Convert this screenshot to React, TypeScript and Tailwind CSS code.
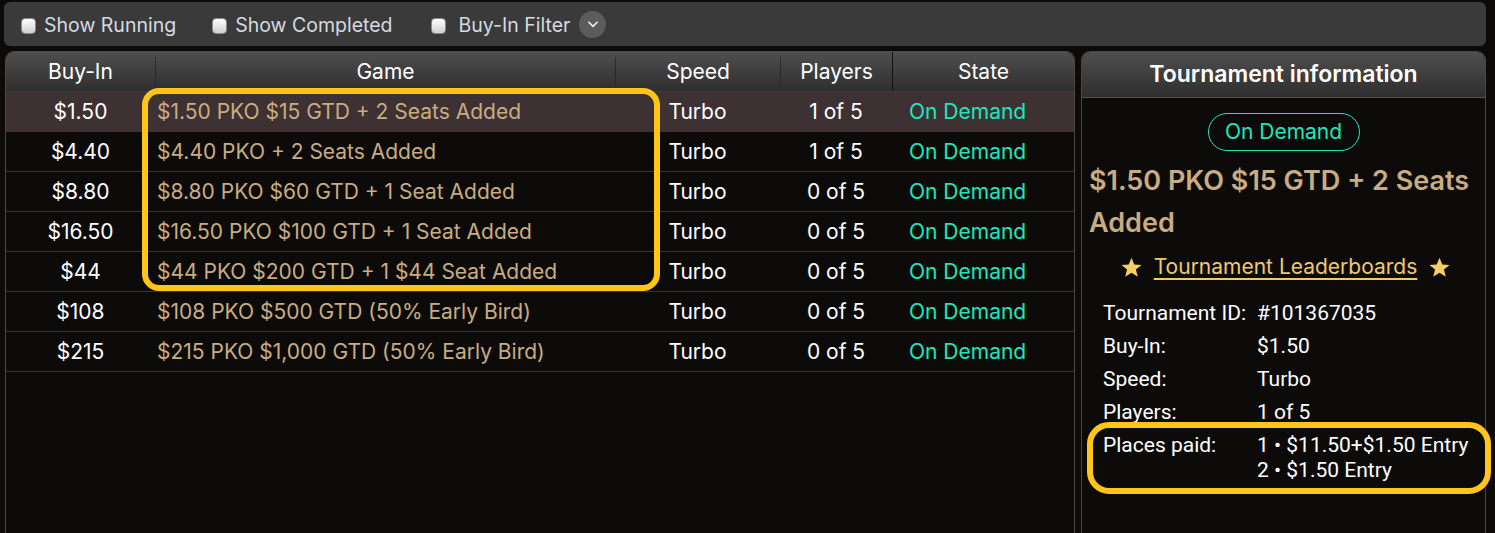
import React from "react";

const rows = [
  { buy: "$1.50", game: "$1.50 PKO $15 GTD + 2 Seats Added", players: "1 of 5", sel: true },
  { buy: "$4.40", game: "$4.40 PKO + 2 Seats Added", players: "1 of 5" },
  { buy: "$8.80", game: "$8.80 PKO $60 GTD + 1 Seat Added", players: "0 of 5" },
  { buy: "$16.50", game: "$16.50 PKO $100 GTD + 1 Seat Added", players: "0 of 5" },
  { buy: "$44", game: "$44 PKO $200 GTD + 1 $44 Seat Added", players: "0 of 5" },
  { buy: "$108", game: "$108 PKO $500 GTD (50% Early Bird)", players: "0 of 5" },
  { buy: "$215", game: "$215 PKO $1,000 GTD (50% Early Bird)", players: "0 of 5" },
];

function Check() {
  return (
    <span className="inline-block w-[15px] h-[16px] rounded-[4px] border border-[#8a8a8a] bg-gradient-to-b from-[#ffffff] to-[#cfcfcf]" />
  );
}

function Star() {
  return (
    <svg width="23" height="23" viewBox="0 0 24 24" className="shrink-0">
      <path
        d="M12 1.8l2.9 7.1 7.6.4-5.9 4.9 2 7.4L12 17.4l-6.6 4.2 2-7.4L1.5 9.3l7.6-.4z"
        fill="#f6cf63"
      />
    </svg>
  );
}

export default function App() {
  const cellFont = { fontFamily: "Inter, 'Noto Sans', sans-serif" };
  return (
    <div
      className="w-[1495px] h-[533px] overflow-hidden bg-[#0c0b0a] pt-[2px] flex flex-col"
      style={cellFont}
    >
      {/* Top bar */}
      <div className="ml-[4px] w-[1482px] h-[44px] shrink-0 rounded-[6px] bg-[#3a3a3a] flex items-center pt-[3px] pl-[17px] text-[19.5px] text-[#d6d9e1]">
        <Check />
        <span className="ml-[8px]">Show Running</span>
        <span className="ml-[36px] flex"><Check /></span>
        <span className="ml-[8px]">Show Completed</span>
        <span className="ml-[38px] flex"><Check /></span>
        <span className="ml-[13px]">Buy-In Filter</span>
        <span className="ml-[9px] -mt-[3px] w-[27px] h-[27px] rounded-full bg-[#5c5c5c] flex items-center justify-center">
          <svg width="14" height="14" viewBox="0 0 24 24" fill="none" stroke="#e8e8e8" strokeWidth="3" strokeLinecap="round" strokeLinejoin="round">
            <path d="M5 9l7 7 7-7" />
          </svg>
        </span>
      </div>

      <div className="flex mt-[5px] ml-[5px] gap-[6px] flex-1">
        {/* Left table panel */}
        <div className="relative w-[1070px] h-[490px] rounded-t-[9px] border border-[#484848] border-b-0 bg-[#0c0b0a]">
          <div className="flex h-[40px] rounded-t-[8px] bg-gradient-to-b from-[#4f4f4f] to-[#2e2e2e] border-b border-[#3a3a3a] text-[21px] text-white">
            <div className="w-[149px] flex items-center justify-center">Buy-In</div>
            <div className="w-[460px] flex items-center justify-center border-l border-[#2a2a2a] my-[5px]">Game</div>
            <div className="w-[165px] flex items-center justify-center border-l border-[#2a2a2a] my-[5px]">Speed</div>
            <div className="w-[112px] flex items-center justify-center border-l border-[#2a2a2a] my-[5px]">Players</div>
            <div className="flex-1 flex items-center justify-center border-l border-[#111]">State</div>
          </div>
          {rows.map((r, i) => (
            <div
              key={i}
              className={`flex h-[40px] items-center text-[21px] border-b ${r.sel ? "bg-[#3e3134] border-[#3e3134]" : "border-[#333232]"}`}
            >
              <div className="w-[149px] text-center text-white">{r.buy}</div>
              <div className="w-[460px] pl-[2px] text-[#c9ad80] whitespace-nowrap">{r.game}</div>
              <div className="w-[165px] text-center text-white">Turbo</div>
              <div className="w-[112px] text-center text-white">{r.players}</div>
              <div className="flex-1 pl-[17px] text-[#1de8bb]">On Demand</div>
            </div>
          ))}
          <div className="absolute left-[136px] top-[36px] w-[518px] h-[203px] rounded-[17px] border-[6px] border-[#ffc619] pointer-events-none" />
        </div>

        {/* Right info panel */}
        <div className="relative w-[405px] h-[490px] rounded-t-[9px] border border-[#484848] border-b-0 bg-[#0c0b0a] flex flex-col">
          <div className="h-[46px] shrink-0 rounded-t-[8px] bg-gradient-to-b from-[#4f4f4f] to-[#2e2e2e] border-b border-[#555] flex items-center justify-center text-[23px] font-semibold text-white">
            Tournament information
          </div>
          <div className="flex justify-center mt-[15px]">
            <div className="w-[152px] h-[38px] rounded-full border-[1.5px] border-[#1de8bb] flex items-center justify-center text-[21px] text-[#1de8bb]">
              On Demand
            </div>
          </div>
          <div className="mt-[9px] pl-[7px] pr-[4px] text-[27px] leading-[42px] font-semibold text-[#c9ad80]">
            $1.50 PKO $15 GTD + 2 Seats Added
          </div>
          <div className="mt-[8px] h-[30px] flex items-center justify-center gap-[11px] pl-[4px]">
            <Star />
            <span className="text-[21px] text-[#f0c96c] underline underline-offset-[4px] decoration-[1.5px]">
              Tournament Leaderboards
            </span>
            <Star />
          </div>
          <div
            className="mt-[19px] pl-[21px] grid grid-cols-[154px_1fr] gap-y-[8px] text-[21px] leading-[25px] text-white"
            style={{ fontFamily: "Roboto, 'Liberation Sans', sans-serif" }}
          >
            <div>Tournament ID:</div>
            <div>#101367035</div>
            <div>Buy-In:</div>
            <div>$1.50</div>
            <div>Speed:</div>
            <div>Turbo</div>
            <div>Players:</div>
            <div>1 of 5</div>
            <div>Places paid:</div>
            <div>
              <div>1 • $11.50+$1.50 Entry</div>
              <div>2 • $1.50 Entry</div>
            </div>
          </div>
          <div className="absolute left-[5px] top-[370px] w-[404px] h-[72px] rounded-[22px] border-[6px] border-[#ffc619] pointer-events-none" />
        </div>
      </div>
    </div>
  );
}
